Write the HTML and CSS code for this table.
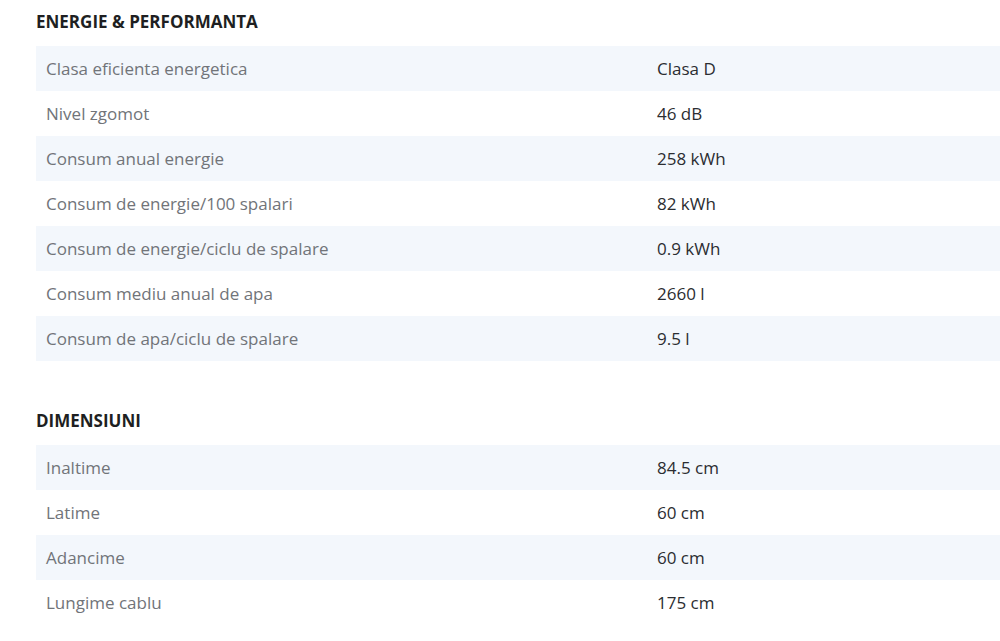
FILE: index.html
```html
<!DOCTYPE html>
<html lang="ro">
<head>
<meta charset="utf-8">
<link rel="stylesheet" href="styles.css">
</head>
<body>
<div class="page">
  <section class="spec">
    <h2 class="spec-title">ENERGIE &amp; PERFORMANTA</h2>
    <div class="spec-table">
      <div class="row"><div class="label">Clasa eficienta energetica</div><div class="value">Clasa D</div></div>
      <div class="row"><div class="label">Nivel zgomot</div><div class="value">46 dB</div></div>
      <div class="row"><div class="label">Consum anual energie</div><div class="value">258 kWh</div></div>
      <div class="row"><div class="label">Consum de energie/100 spalari</div><div class="value">82 kWh</div></div>
      <div class="row"><div class="label">Consum de energie/ciclu de spalare</div><div class="value">0.9 kWh</div></div>
      <div class="row"><div class="label">Consum mediu anual de apa</div><div class="value">2660 l</div></div>
      <div class="row"><div class="label">Consum de apa/ciclu de spalare</div><div class="value">9.5 l</div></div>
    </div>
  </section>
  <section class="spec">
    <h2 class="spec-title">DIMENSIUNI</h2>
    <div class="spec-table">
      <div class="row"><div class="label">Inaltime</div><div class="value">84.5 cm</div></div>
      <div class="row"><div class="label">Latime</div><div class="value">60 cm</div></div>
      <div class="row"><div class="label">Adancime</div><div class="value">60 cm</div></div>
      <div class="row"><div class="label">Lungime cablu</div><div class="value">175 cm</div></div>
    </div>
  </section>
</div>
</body>
</html>
```
FILE: styles.css
```css
html, body {
  margin: 0;
  padding: 0;
  background: #ffffff;
}
body {
  font-family: "Open Sans", "Liberation Sans", sans-serif;
  overflow: hidden;
}
.page {
  padding: 0 0 0 36px;
  display: flex;
  flex-direction: column;
  gap: 38px;
}
.spec-title {
  margin: 0;
  height: 46px;
  display: flex;
  align-items: center;
  padding-bottom: 3px;
  box-sizing: border-box;
  font-size: 17px;
  font-weight: 700;
  color: #1e1f22;
}
.spec-table {
  display: flex;
  flex-direction: column;
}
.row {
  display: grid;
  grid-template-columns: 611px 1fr;
  height: 45px;
  align-items: center;
  font-size: 17px;
  line-height: 24px;
}
.row:nth-child(odd) {
  background: #f3f7fc;
}
.label {
  padding-left: 10px;
  color: #717479;
}
.value {
  padding-left: 10px;
  color: #2b2d31;
}
```
